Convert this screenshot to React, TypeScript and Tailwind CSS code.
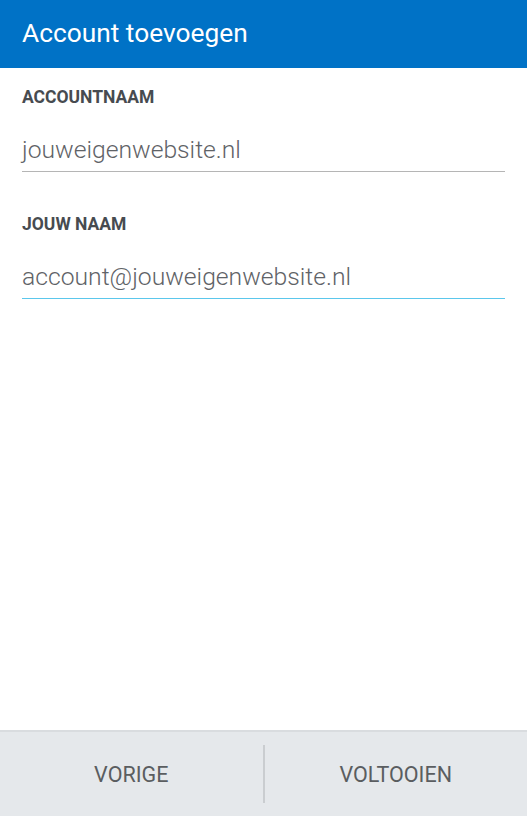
import React from "react";

const Field = ({ label, value, active }: { label: string; value: string; active?: boolean }) => (
  <div>
    <div className="h-[20px] text-[17.5px] font-bold leading-[20px] text-[#474b50]">{label}</div>
    <div
      className={`mt-[28px] h-[37px] border-b pb-[6px] text-[24.7px] font-light leading-[30px] text-[#5f6367] ${
        active ? "border-[#5bc7ec]" : "border-[#b5b5b5]"
      }`}
    >
      {value}
    </div>
  </div>
);

const App = () => {
  return (
    <div className="flex h-[816px] w-[527px] flex-col bg-white font-['Roboto',sans-serif]">
      <header className="flex h-[68px] items-center bg-[#0072c6] px-[22px] pb-[3px]">
        <h1 className="text-[26.3px] leading-[30px] text-white">Account toevoegen</h1>
      </header>
      <main className="flex flex-1 flex-col gap-[42px] px-[22px] pt-[19px]">
        <Field label="ACCOUNTNAAM" value="jouweigenwebsite.nl" />
        <Field label="JOUW NAAM" value="account@jouweigenwebsite.nl" active />
      </main>
      <footer className="flex h-[86px] items-center border-t-2 border-[#d9dcdf] bg-[#e5e8eb]">
        <button className="flex-1 pt-[3px] text-center text-[21.5px] text-[#5a5d60]">VORIGE</button>
        <div className="h-[58px] w-[2px] bg-[#cacdd0]" />
        <button className="flex-1 pt-[3px] text-center text-[21.5px] text-[#5a5d60]">VOLTOOIEN</button>
      </footer>
    </div>
  );
};

export default App;
